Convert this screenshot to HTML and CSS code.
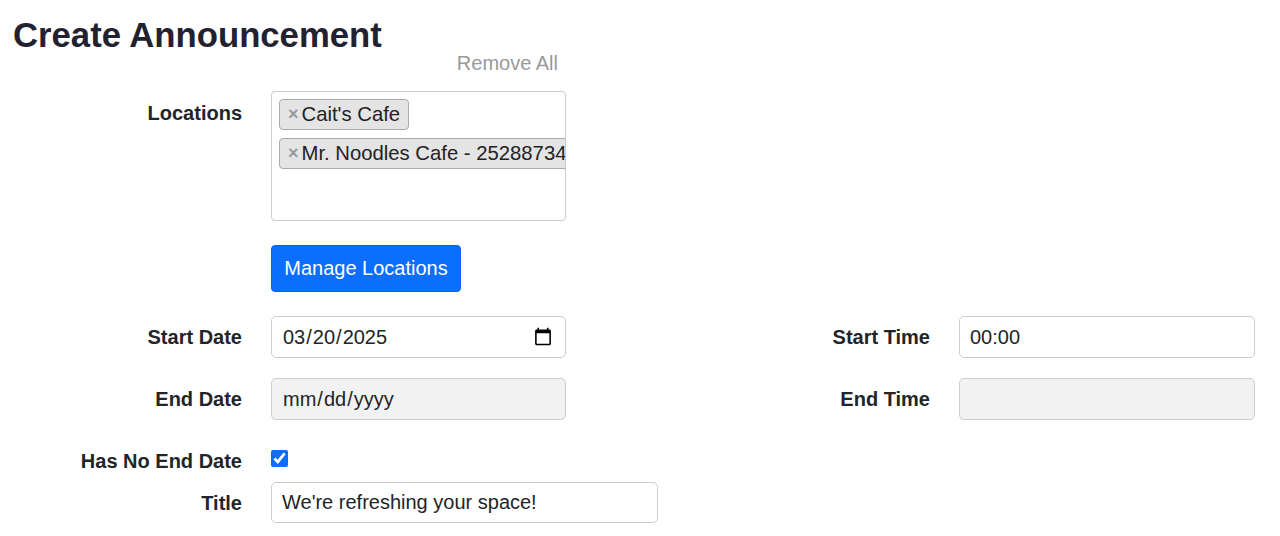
FILE: index.html
```html
<!DOCTYPE html>
<html lang="en">
<head>
<meta charset="utf-8">
<title>Create Announcement</title>
<link rel="stylesheet" href="styles.css">
</head>
<body>
<div class="page">
  <h1 class="page-title">Create Announcement</h1>
  <form class="form">
    <div class="row row-remove">
      <div></div>
      <div class="remove-all">Remove All</div>
    </div>
    <div class="row row-locations">
      <label class="label label-top">Locations</label>
      <div class="tag-box">
        <span class="tag"><span class="tag-x">×</span>Cait's Cafe</span>
        <span class="tag"><span class="tag-x">×</span>Mr. Noodles Cafe - 25288734</span>
      </div>
    </div>
    <div class="row row-button">
      <div></div>
      <div><button type="button" class="btn">Manage Locations</button></div>
    </div>
    <div class="row row-field">
      <label class="label">Start Date</label>
      <input class="input" type="date" value="2025-03-20">
      <label class="label">Start Time</label>
      <input class="input" type="text" value="00:00">
    </div>
    <div class="row row-field">
      <label class="label">End Date</label>
      <input class="input input-date-disabled" type="date" disabled>
      <label class="label">End Time</label>
      <input class="input" type="text" disabled>
    </div>
    <div class="row row-check">
      <label class="label">Has No End Date</label>
      <div><input class="check" type="checkbox" checked></div>
    </div>
    <div class="row row-title">
      <label class="label">Title</label>
      <input class="input input-wide" type="text" value="We're refreshing your space!">
    </div>
  </form>
</div>
</body>
</html>
```

FILE: styles.css
```css
html, body {
  margin: 0;
  padding: 0;
  background: #ffffff;
}

body {
  font-family: "Liberation Sans", Arial, Helvetica, sans-serif;
  color: #212529;
  font-size: 20px;
}

.page {
  padding-left: 13px;
  width: 1242px;
}

.page-title {
  margin: 17px 0 0 0;
  font-size: 34.7px;
  line-height: 36px;
  font-weight: bold;
  color: #212130;
}

.row {
  display: grid;
  grid-template-columns: 229px 295px 335px 296px;
  column-gap: 29px;
  align-items: center;
}

.row-remove {
  height: 20px;
  margin-bottom: 18px;
}

.remove-all {
  text-align: right;
  padding-right: 8px;
  color: #999999;
  line-height: 20px;
}

.row-locations {
  align-items: start;
  margin-bottom: 24px;
}

.label {
  font-weight: bold;
  text-align: right;
  line-height: 24px;
}

.label-top {
  padding-top: 10px;
}

.tag-box {
  height: 130px;
  box-sizing: border-box;
  border: 1px solid #cccccc;
  border-radius: 4px;
  padding: 7px;
  display: flex;
  flex-direction: column;
  align-items: flex-start;
  gap: 8px;
  overflow: hidden;
}

.tag {
  display: inline-flex;
  align-items: center;
  white-space: nowrap;
  height: 31px;
  box-sizing: border-box;
  border: 1px solid #aaaaaa;
  border-radius: 4px;
  background: #e4e4e4;
  padding: 0 8px 0 8px;
  line-height: 29px;
  color: #222222;
  font-size: 20.3px;
}

.tag-x {
  color: #999999;
  font-weight: bold;
  font-size: 18px;
  margin-right: 3px;
}

.row-button {
  margin-bottom: 24px;
}

.btn {
  height: 47px;
  padding: 0 12px;
  background: #0b6efd;
  border: 1px solid #0a63e6;
  border-radius: 4px;
  color: #ffffff;
  font-family: "Liberation Sans", Arial, Helvetica, sans-serif;
  font-size: 20px;
  min-width: 190px;
  cursor: pointer;
}

.row-field {
  margin-bottom: 20px;
}

.input {
  height: 42px;
  box-sizing: border-box;
  border: 1px solid #cccccc;
  border-radius: 5px;
  padding: 0 10px;
  font-family: "Liberation Sans", Arial, Helvetica, sans-serif;
  font-size: 20px;
  color: #212529;
  background: #ffffff;
  width: 100%;
  margin: 0;
}

.input:disabled {
  background: #f2f2f2;
  color: #212529;
}

.input-date-disabled::-webkit-calendar-picker-indicator {
  display: none;
}

.input-date-disabled::-webkit-datetime-edit,
.input-date-disabled::-webkit-datetime-edit-fields-wrapper,
.input-date-disabled::-webkit-datetime-edit-month-field,
.input-date-disabled::-webkit-datetime-edit-day-field,
.input-date-disabled::-webkit-datetime-edit-year-field,
.input-date-disabled::-webkit-datetime-edit-text {
  color: #212529;
}

.row-check {
  height: 42px;
}

.check {
  display: block;
  width: 17px;
  height: 17px;
  margin: -5px 0 0 0;
  accent-color: #0b6efd;
}

.input-wide {
  width: 387px;
  height: 41px;
}
```
